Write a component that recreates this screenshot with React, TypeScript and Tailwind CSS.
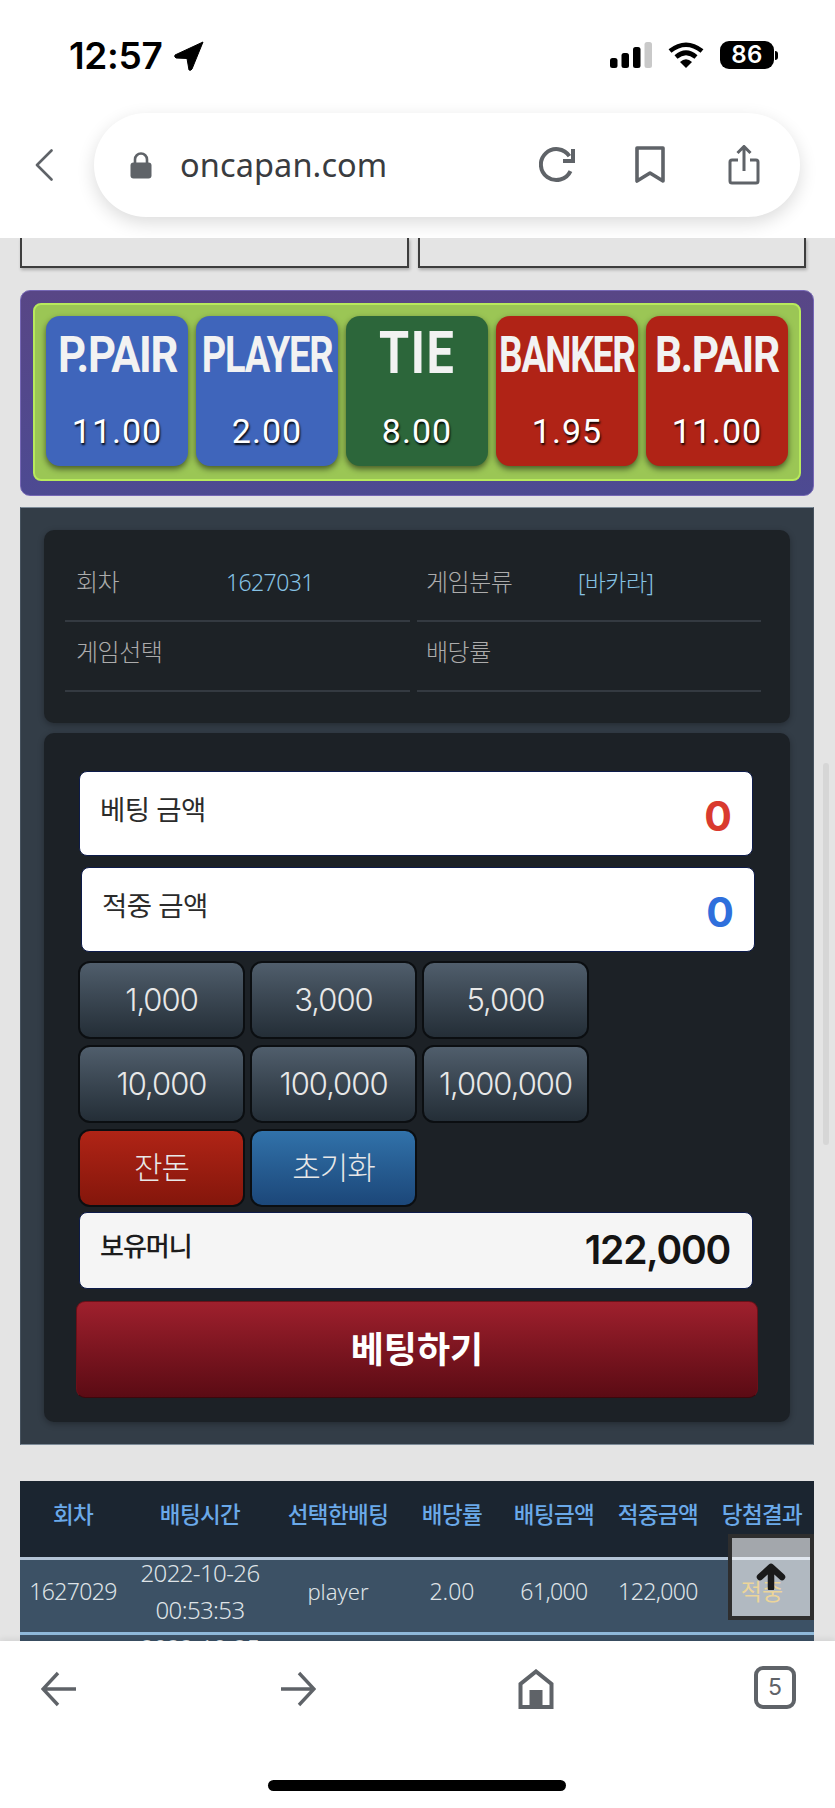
import React from "react";

const kr = "font-['Noto_Sans','Noto_Sans_CJK_KR',sans-serif]";

const odds = [
  { name: "P.PAIR", rate: "11.00", bg: "bg-[#3f65bb]", fit: "scale-x-[0.87]" },
  { name: "PLAYER", rate: "2.00", bg: "bg-[#3f65bb]", fit: "scale-x-[0.76]" },
  { name: "TIE", rate: "8.00", bg: "bg-[#2c663a]", fit: "scale-x-[0.81]" },
  { name: "BANKER", rate: "1.95", bg: "bg-[#b02316]", fit: "scale-x-[0.74]" },
  { name: "B.PAIR", rate: "11.00", bg: "bg-[#b02316]", fit: "scale-x-[0.85]" },
];

const chips = ["1,000", "3,000", "5,000", "10,000", "100,000", "1,000,000"];

const head = ["회차", "배팅시간", "선택한배팅", "배당률", "배팅금액", "적중금액", "당첨결과"];
const cols = "grid grid-cols-[106px_148px_128px_100px_104px_104px_104px]";

function StatusBar() {
  return (
    <div className="flex h-[113px] items-start justify-between pl-[69px] pr-[57px] pt-[36px]">
      <div className="flex items-center gap-[11px]">
        <span className="font-['Inter',sans-serif] text-[37px] font-semibold leading-[40px] tracking-[-0.3px] text-black">12:57</span>
        <svg width="30" height="30" viewBox="0 0 30 30">
          <path d="M29 1 L1 14 Q0 16 2 17 L13 17.5 L15 29 Q17 30 18 28 Z" fill="#000" stroke="#000" strokeWidth="1" strokeLinejoin="round" />
        </svg>
      </div>
      <div className="flex items-center gap-[16px] pt-[5px]">
        <svg width="42" height="26" viewBox="0 0 42 26">
          <rect x="0" y="16" width="7.5" height="10" rx="2.5" fill="#000" />
          <rect x="11.5" y="11" width="7.5" height="15" rx="2.5" fill="#000" />
          <rect x="23" y="5" width="7.5" height="21" rx="2.5" fill="#000" />
          <rect x="34.5" y="0" width="7.5" height="26" rx="2.5" fill="#c9c9c9" />
        </svg>
        <svg width="36" height="26" viewBox="0 0 36 26">
          <path d="M2 9 Q18 -3.5 34 9" stroke="#000" strokeWidth="4.6" fill="none" />
          <path d="M8 15 Q18 6.5 28 15" stroke="#000" strokeWidth="4.6" fill="none" />
          <path d="M12 20 L18 26 L24 20 Q18 14.5 12 20 Z" fill="#000" />
        </svg>
        <div className="flex items-center gap-[1px]">
          <div className="flex h-[28px] w-[54px] items-center justify-center rounded-[9px] bg-black font-['Inter',sans-serif] text-[24px] font-semibold tracking-[0.5px] text-white">
            86
          </div>
          <div className="h-[9px] w-[3px] rounded-r-full bg-black" />
        </div>
      </div>
    </div>
  );
}

function UrlBar() {
  return (
    <div className="flex items-start pl-[35px]">
      <svg width="18" height="32" viewBox="0 0 18 32" className="mt-[36px]">
        <path d="M16.5 1.5 L2 16 L16.5 30.5" stroke="#5f6368" strokeWidth="2.6" fill="none" strokeLinecap="round" strokeLinejoin="round" />
      </svg>
      <div className="ml-[41px] flex h-[104px] w-[706px] items-center rounded-[52px] bg-white pl-[36px] shadow-[0_6px_18px_rgba(0,0,0,0.14)]">
        <svg width="22" height="27" viewBox="0 0 22 27">
          <path d="M5 12 V7.5 A6 6 0 0 1 17 7.5 V12" stroke="#5f6368" strokeWidth="2.6" fill="none" />
          <rect x="0.5" y="10.5" width="21" height="16" rx="3" fill="#5f6368" />
        </svg>
        <span className={`ml-[28px] text-[32.5px] leading-[40px] tracking-[0.1px] text-[#3a3c40] ${kr}`}>oncapan.com</span>
        <svg width="36" height="36" viewBox="0 0 36 36" className="ml-[152px]">
          <path d="M31 10 A15.5 15.5 0 1 0 31 25" stroke="#5f6368" strokeWidth="4" fill="none" transform="rotate(-4 18 18)" />
          <path d="M24 14 H34 V2" stroke="#5f6368" strokeWidth="4" fill="none" />
        </svg>
        <svg width="30" height="38" viewBox="0 0 30 38" className="ml-[60px]">
          <path d="M2 2 H28 V35 L15 27 L2 35 Z" stroke="#5f6368" strokeWidth="3.6" fill="none" strokeLinejoin="round" />
        </svg>
        <svg width="32" height="40" viewBox="0 0 32 40" className="ml-[63px]">
          <path d="M10 15 H4 Q2 15 2 17 V36 Q2 38 4 38 H28 Q30 38 30 36 V17 Q30 15 28 15 H22" stroke="#5f6368" strokeWidth="3" fill="none" />
          <path d="M16 26 V2 M9.5 8 L16 1.5 L22.5 8" stroke="#5f6368" strokeWidth="3" fill="none" />
        </svg>
      </div>
    </div>
  );
}

function OddsPanel() {
  return (
    <div className="mt-[22px] rounded-[10px] border border-[#7668b5] bg-gradient-to-b from-[#584686] to-[#4d4a92] px-[12px] pb-[14px] pt-[12px]">
      <div className="flex gap-[8px] rounded-[8px] border-2 border-[#b8ea5c] bg-[#9bc655] px-[11px] pb-[13px] pt-[11px]">
        {odds.map((o) => (
          <div
            key={o.name}
            className={`flex h-[150px] min-w-0 flex-1 flex-col items-center overflow-hidden rounded-[14px] shadow-[0_3px_6px_rgba(0,0,0,0.55)] ${o.bg}`}
          >
            <div
              className={
                o.name === "TIE"
                  ? `mt-[7px] h-[60px] font-['Roboto',sans-serif] text-[60px] font-bold leading-[60px] tracking-[2px] text-[#f2f2f2] ${o.fit}`
                  : `mt-[11px] h-[56px] whitespace-nowrap font-['Roboto',sans-serif] text-[50px] font-bold leading-[56px] tracking-[-1.5px] text-[#f2f2f2] ${o.fit}`
              }
            >
              {o.name}
            </div>
            <div className="mt-auto mb-[15px] font-['Roboto',sans-serif] text-[34px] leading-[40px] tracking-[1px] text-white [text-shadow:1px_2px_2px_rgba(0,0,0,0.9)]">
              {o.rate}
            </div>
          </div>
        ))}
      </div>
    </div>
  );
}

function InfoRow({ a, av, b, bv }: { a: string; av?: string; b: string; bv?: string }) {
  return (
    <div className="flex gap-[7px]">
      {[
        { l: a, v: av, w: "w-[345px] pl-[11px]", lw: "w-[150px]" },
        { l: b, v: bv, w: "w-[344px] pl-[9px]", lw: "w-[152px]" },
      ].map((c) => (
        <div key={c.l} className={`flex h-[70px] items-center border-b-2 border-[#343a41] pb-[8px] ${c.w}`}>
          <span className={`text-[24px] font-light tracking-[-0.5px] text-[#acacac] ${c.lw}`}>{c.l}</span>
          {c.v && <span className="text-[23px] font-light tracking-[-0.6px] text-[#86c2e4]">{c.v}</span>}
        </div>
      ))}
    </div>
  );
}

function AmountBox({ label, color, shift }: { label: string; color: string; shift?: boolean }) {
  return (
    <div className={`flex h-[85px] w-[674px] items-center justify-between rounded-[8px] border border-[#0d1b4a] bg-white pl-[20px] pr-[20px] ${shift ? "ml-[2px]" : ""}`}>
      <span className="-mt-[8px] text-[27.5px] tracking-[-0.5px] text-[#2b2b2b]">{label}</span>
      <span className={`mt-[6px] font-['Inter',sans-serif] text-[41px] font-bold leading-none ${color}`}>0</span>
    </div>
  );
}

function KeyButton({ label, tone }: { label: string; tone: string }) {
  return (
    <button className={`flex h-[78px] w-[167px] items-center justify-center whitespace-nowrap rounded-[12px] border-2 border-[#0b0e11] font-['Inter','Noto_Sans_CJK_KR',sans-serif] text-[31px] font-light tracking-[-1px] text-[#e8e8e8] ${tone}`}>
      {label}
    </button>
  );
}

function BetPanel() {
  const dark = "bg-gradient-to-b from-[#505e6c] to-[#242e37]";
  return (
    <div className="mt-[11px] border border-[#46525e] border-t-[#7c8a97] border-b-[#7c8a97] bg-[#333d47] px-[23px] pb-[22px] pt-[22px]">
      <div className="rounded-[10px] bg-[#1d2226] pb-[31px] pl-[21px] pt-[22px] shadow-[0_2px_6px_rgba(0,0,0,0.3)]">
        <InfoRow a="회차" av="1627031" b="게임분류" bv="[바카라]" />
        <InfoRow a="게임선택" b="배당률" />
      </div>
      <div className="mt-[10px] rounded-[10px] bg-[#1c2126] pb-[24px] pl-[35px] pt-[38px] shadow-[0_2px_6px_rgba(0,0,0,0.3)]">
        <AmountBox label="베팅 금액" color="text-[#d93a2f]" />
        <div className="mt-[11px]">
          <AmountBox label="적중 금액" color="text-[#2f6fdc]" shift />
        </div>
        <div className="-ml-[1px] mt-[9px] grid w-[511px] grid-cols-3 gap-x-[5px] gap-y-[6px]">
          {chips.map((c) => (
            <KeyButton key={c} label={c} tone={dark} />
          ))}
          <KeyButton label="잔돈" tone="bg-gradient-to-b from-[#b02416] to-[#84160b]" />
          <KeyButton label="초기화" tone="bg-gradient-to-b from-[#3172aa] to-[#1c4779]" />
        </div>
        <div className="mt-[5px] flex h-[77px] w-[674px] items-center justify-between rounded-[8px] border border-[#0d1b4a] bg-[#f5f5f5] pl-[20px] pr-[22px]">
          <span className="-mt-[9px] text-[26px] font-medium tracking-[-1px] text-[#1c1c1c]">보유머니</span>
          <span className="font-['Inter',sans-serif] text-[39px] font-semibold tracking-[-1.2px] text-[#141414]">122,000</span>
        </div>
        <button className="-ml-[3px] mt-[12px] flex h-[97px] w-[682px] items-center justify-center rounded-[9px] border border-[#6b1018] border-b-[#3d070c] bg-gradient-to-b from-[#9f202d] to-[#5b0b14] text-[36px] font-semibold text-white">
          베팅하기
        </button>
      </div>
    </div>
  );
}

function ResultTable() {
  return (
    <div className="relative mt-[36px] text-[23px] font-light text-[#dfe3e7]">
      <div className={`${cols} h-[76px] items-center bg-[#1b2530] pb-[8px] text-[22.5px] font-medium tracking-[-0.6px] text-[#6aa9e9]`}>
        {head.map((h) => (
          <div key={h} className="text-center whitespace-nowrap">
            {h}
          </div>
        ))}
      </div>
      <div className={`${cols} h-[78px] items-center border-y-[3px] border-t-[#b3c4d6] border-b-[#8fb9da] bg-[#3c5165] pb-[10px] text-center`}>
        <div className="tracking-[-0.6px]">1627029</div>
        <div className="-my-[6px] text-[24px] leading-[37px] tracking-[-0.6px]">
          2022-10-26
          <br />
          00:53:53
        </div>
        <div className="text-[22px]">player</div>
        <div>2.00</div>
        <div className="tracking-[-0.6px]">61,000</div>
        <div className="tracking-[-0.6px]">122,000</div>
        <div className="font-normal text-[#cf9600]">적중</div>
      </div>
      <div className={`${cols} bg-[#3c5165] text-center`}>
        <div />
        <div className="text-[24px] leading-[25px] tracking-[-0.6px]">2022-10-25</div>
      </div>
      {/* 맨 위로 버튼 */}
      <div className="absolute right-0 top-[53px] flex h-[86px] w-[86px] items-start justify-center border-[4px] border-[#2e2e2e] bg-white/60 pt-[25px]">
        <svg width="30" height="27" viewBox="0 0 30 27">
          <path d="M15 25 V5 M4 14 L15 4 L26 14" stroke="#1a1a1a" strokeWidth="6.5" fill="none" strokeLinecap="round" strokeLinejoin="round" />
        </svg>
      </div>
    </div>
  );
}

function BottomBar() {
  return (
    <div className="relative z-10 h-[167px] shrink-0 bg-white shadow-[0_-2px_6px_rgba(0,0,0,0.08)]">
      <div className="flex items-start pl-[41px] pt-[25px]">
        <svg width="36" height="36" viewBox="0 0 36 36" className="mt-[5px]">
          <path d="M17 2 L2 18 L17 34 M2 18 H35" stroke="#5f6368" strokeWidth="3.4" fill="none" />
        </svg>
        <svg width="36" height="36" viewBox="0 0 36 36" className="ml-[203px] mt-[5px]">
          <path d="M19 2 L34 18 L19 34 M34 18 H1" stroke="#5f6368" strokeWidth="3.4" fill="none" />
        </svg>
        <svg width="36" height="40" viewBox="0 0 36 40" className="ml-[202px] mt-[3px]">
          <path d="M2.5 38 V15 L18 2.5 L33.5 15 V38 Z" stroke="#5f6368" strokeWidth="4" fill="none" />
          <rect x="11.5" y="21" width="13" height="17" fill="#5f6368" />
        </svg>
        <div className="ml-[200px] flex h-[43px] w-[42px] items-center justify-center rounded-[9px] border-[4px] border-[#5f6368] font-['Inter',sans-serif] text-[23px] text-[#5f6368]">
          5
        </div>
      </div>
      <div className="absolute bottom-[17px] left-[268px] h-[11px] w-[298px] rounded-full bg-black" />
    </div>
  );
}

export default function App() {
  return (
    <div className={`relative flex h-[1808px] w-[835px] flex-col overflow-hidden bg-[#e4e4e4] ${kr}`}>
      <header className="relative z-10 h-[238px] shrink-0 bg-white">
        <StatusBar />
        <UrlBar />
      </header>

      <main className="min-h-0 flex-1 overflow-hidden pl-[20px] pr-[21px]">
        <div className="flex gap-[9px]">
          <div className="h-[30px] w-[389px] border-x-2 border-b-2 border-[#3d3d3d] shadow-[1px_2px_3px_rgba(0,0,0,0.25)]" />
          <div className="h-[30px] w-[388px] border-x-2 border-b-2 border-[#3d3d3d] shadow-[1px_2px_3px_rgba(0,0,0,0.25)]" />
        </div>
        <OddsPanel />
        <BetPanel />
        <ResultTable />
      </main>

      <BottomBar />

      {/* 스크롤바 */}
      <div className="absolute right-[6px] top-[763px] h-[382px] w-[6px] rounded-full bg-[#d6d6d6]" />
    </div>
  );
}
